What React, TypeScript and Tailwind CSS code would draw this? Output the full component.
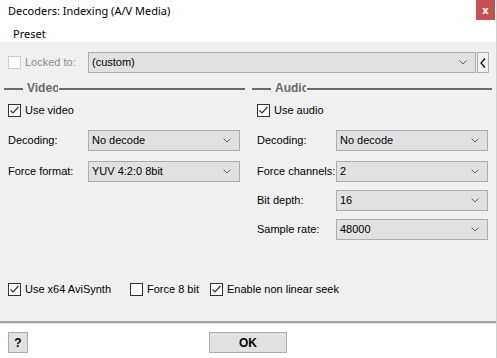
import React from "react";

const Chevron: React.FC = () => (
  <svg width="8" height="5" viewBox="0 0 8 5" className="shrink-0">
    <polyline points="0.5,0.5 4,4 7.5,0.5" fill="none" stroke="#606060" strokeWidth="1" />
  </svg>
);

const CheckBox: React.FC<{ checked?: boolean; disabled?: boolean }> = ({ checked, disabled }) => (
  <span
    className={`flex h-[13px] w-[13px] shrink-0 items-center justify-center border bg-white ${
      disabled ? "border-[#cccccc]" : "border-[#333333]"
    }`}
  >
    {checked && (
      <svg width="11" height="11" viewBox="0 0 11 11">
        <polyline points="1.5,5.5 4,8 9.5,2" fill="none" stroke="#333333" strokeWidth="1.2" />
      </svg>
    )}
  </span>
);

const Check: React.FC<{ label: string; checked?: boolean; disabled?: boolean }> = ({
  label,
  checked,
  disabled,
}) => (
  <label className="flex h-[13px] items-center gap-[4px] leading-[13px]">
    <CheckBox checked={checked} disabled={disabled} />
    <span className={disabled ? "text-[#8d8d8d]" : "text-black"}>{label}</span>
  </label>
);

const Combo: React.FC<{ value: string; className?: string }> = ({ value, className }) => (
  <div
    className={`flex h-[21px] items-center justify-between border border-[#adadad] bg-[#e1e1e1] pl-[3px] pr-[8px] ${
      className ?? ""
    }`}
  >
    <span>{value}</span>
    <Chevron />
  </div>
);

const Field: React.FC<{ label: string; value: string; labelWidth: string; className?: string }> = ({
  label,
  value,
  labelWidth,
  className,
}) => (
  <div className={`flex items-center ${className ?? ""}`}>
    <span className={`${labelWidth} shrink-0`}>{label}</span>
    <Combo value={value} className="flex-1" />
  </div>
);

const GroupHeader: React.FC<{ title: string; textWidth: string }> = ({ title, textWidth }) => (
  <div className="flex h-[13px] items-center">
    <div className="h-[2px] w-[19px] bg-[#6a6a6a]" />
    <span
      className={`ml-[4px] ${textWidth} overflow-hidden whitespace-nowrap text-[12px] font-bold leading-[13px] text-[#6a6a6a]`}
    >
      {title}
    </span>
    <div className="ml-[1px] h-[2px] flex-1 bg-[#6a6a6a]" />
  </div>
);

export default function App() {
  return (
    <div
      className="flex h-[358px] w-[497px] flex-col border-r border-[#d0d0d0] bg-white text-[11px] text-black"
      style={{ fontFamily: '"Liberation Sans", Arial, sans-serif' }}
    >
      <header className="flex h-[21px] items-center justify-between" style={{ fontFamily: '"Noto Sans", sans-serif' }}>
        <span className="pl-[8px] pt-[1px] text-[11px]">Decoders: Indexing (A/V Media)</span>
        <div className="mr-[1px] flex h-[20px] w-[19px] items-center justify-center self-start bg-[#c75050] text-[11px] font-bold text-white">
          x
        </div>
      </header>
      <nav className="flex h-[21px] items-center pl-[13px] pt-[5px] text-[11px]" style={{ fontFamily: '"Noto Sans", sans-serif' }}>
        Preset
      </nav>

      <main className="flex h-[279px] flex-col bg-[#f0f0f0] pt-[10px]">
        <div className="flex h-[21px] items-center pl-[8px]">
          <div className="w-[80px]">
            <Check label="Locked to:" disabled />
          </div>
          <Combo value="(custom)" className="w-[388px]" />
          <div className="ml-[1px] flex h-[21px] w-[12px] items-center justify-center border border-[#adadad] bg-[#f3f3f3]">
            <svg width="6" height="10" viewBox="0 0 6 10">
              <polyline points="5,0.5 1,5 5,9.5" fill="none" stroke="#000" strokeWidth="1.2" />
            </svg>
          </div>
        </div>

        <div className="mt-[9px] flex gap-[7px] pl-[4px]">
          <section className="flex w-[241px] flex-col">
            <GroupHeader title="Video" textWidth="w-[31px]" />
            <div className="mt-[9px] flex flex-col pl-[4px] pr-[5px]">
              <Check label="Use video" checked />
              <div className="mt-[13px] flex flex-col gap-[10px]">
                <Field label="Decoding:" value="No decode" labelWidth="w-[80px]" />
                <Field label="Force format:" value="YUV 4:2:0 8bit" labelWidth="w-[80px]" />
              </div>
            </div>
          </section>
          <section className="flex w-[240px] flex-col">
            <GroupHeader title="Audio" textWidth="w-[31px]" />
            <div className="mt-[9px] flex flex-col pl-[5px] pr-[4px]">
              <Check label="Use audio" checked />
              <div className="mt-[13px] flex flex-col gap-[8px]">
                <Field label="Decoding:" value="No decode" labelWidth="w-[79px]" className="mb-[2px]" />
                <Field label="Force channels:" value="2" labelWidth="w-[79px]" />
                <Field label="Bit depth:" value="16" labelWidth="w-[79px]" />
                <Field label="Sample rate:" value="48000" labelWidth="w-[79px]" />
              </div>
            </div>
          </section>
        </div>

        <div className="mt-auto mb-[25px] flex items-center pl-[8px]">
          <div className="w-[122px]">
            <Check label="Use x64 AviSynth" checked />
          </div>
          <div className="w-[80px]">
            <Check label="Force 8 bit" />
          </div>
          <Check label="Enable non linear seek" checked />
        </div>
      </main>
      <div className="h-[2px] bg-[#a3a3a3]" />
      <div className="h-[1px] bg-[#dcdcdc]" />

      <footer className="flex pt-[8px] pl-[8px]">
        <button className="flex h-[21px] w-[20px] items-center justify-center border border-[#adadad] bg-[#e1e1e1] text-[12px] font-bold">
          ?
        </button>
        <button className="ml-[181px] flex h-[21px] w-[78px] items-center justify-center border border-[#adadad] bg-[#e1e1e1] text-[12px] font-bold">
          OK
        </button>
      </footer>
    </div>
  );
}
